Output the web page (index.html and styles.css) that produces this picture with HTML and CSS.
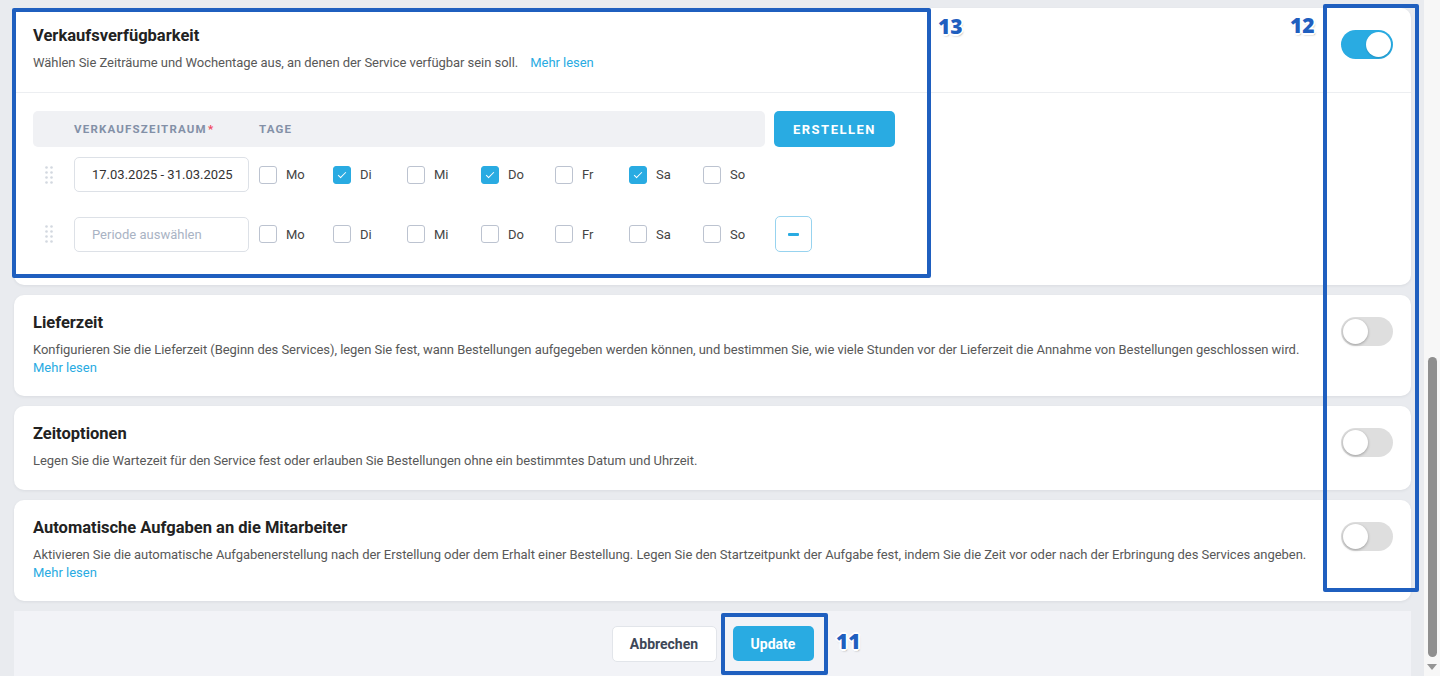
FILE: index.html
```html
<!DOCTYPE html>
<html lang="de">
<head>
    <meta charset="utf-8">
    <title>Service bearbeiten</title>
    <link rel="stylesheet" href="styles.css">
</head>
<body>
<div class="page">
    <main class="content">
        <section class="card">
            <div class="card-head card-head-split">
                <div class="card-text">
                    <h2 class="card-title">Verkaufsverfügbarkeit</h2>
                    <p class="card-desc">Wählen Sie Zeiträume und Wochentage aus, an denen der Service verfügbar sein soll. <a class="more more-inline" href="#">Mehr lesen</a></p>
                </div>
                <span class="switch on"></span>
            </div>
            <div class="card-body">
                <div class="periods-head">
                    <div class="periods-bar">
                        <span class="col-period">Verkaufszeitraum<span class="req">*</span></span>
                        <span class="col-days">Tage</span>
                    </div>
                    <button class="btn btn-primary btn-create">Erstellen</button>
                </div>

                <div class="period-row">
                    <div class="period-main">
                        <span class="drag">
                            <svg width="8" height="18" viewBox="0 0 8 18"><g fill="#d3d8e0"><circle cx="1.5" cy="1.5" r="1.3"/><circle cx="6.5" cy="1.5" r="1.3"/><circle cx="1.5" cy="6.5" r="1.3"/><circle cx="6.5" cy="6.5" r="1.3"/><circle cx="1.5" cy="11.5" r="1.3"/><circle cx="6.5" cy="11.5" r="1.3"/><circle cx="1.5" cy="16.5" r="1.3"/><circle cx="6.5" cy="16.5" r="1.3"/></g></svg>
                        </span>
                        <div class="period-input">17.03.2025 - 31.03.2025</div>
                        <div class="days">
                            <label class="day"><span class="check"></span>Mo</label>
                            <label class="day"><span class="check checked"></span>Di</label>
                            <label class="day"><span class="check"></span>Mi</label>
                            <label class="day"><span class="check checked"></span>Do</label>
                            <label class="day"><span class="check"></span>Fr</label>
                            <label class="day"><span class="check checked"></span>Sa</label>
                            <label class="day"><span class="check"></span>So</label>
                        </div>
                    </div>
                    <div class="period-action"></div>
                </div>

                <div class="period-row">
                    <div class="period-main">
                        <span class="drag">
                            <svg width="8" height="18" viewBox="0 0 8 18"><g fill="#d3d8e0"><circle cx="1.5" cy="1.5" r="1.3"/><circle cx="6.5" cy="1.5" r="1.3"/><circle cx="1.5" cy="6.5" r="1.3"/><circle cx="6.5" cy="6.5" r="1.3"/><circle cx="1.5" cy="11.5" r="1.3"/><circle cx="6.5" cy="11.5" r="1.3"/><circle cx="1.5" cy="16.5" r="1.3"/><circle cx="6.5" cy="16.5" r="1.3"/></g></svg>
                        </span>
                        <div class="period-input placeholder">Periode auswählen</div>
                        <div class="days">
                            <label class="day"><span class="check"></span>Mo</label>
                            <label class="day"><span class="check"></span>Di</label>
                            <label class="day"><span class="check"></span>Mi</label>
                            <label class="day"><span class="check"></span>Do</label>
                            <label class="day"><span class="check"></span>Fr</label>
                            <label class="day"><span class="check"></span>Sa</label>
                            <label class="day"><span class="check"></span>So</label>
                        </div>
                    </div>
                    <div class="period-action">
                        <button class="btn-remove"><span></span></button>
                    </div>
                </div>
            </div>
        </section>

        <section class="card">
            <div class="card-head">
                <div class="card-text">
                    <h2 class="card-title">Lieferzeit</h2>
                    <p class="card-desc">Konfigurieren Sie die Lieferzeit (Beginn des Services), legen Sie fest, wann Bestellungen aufgegeben werden können, und bestimmen Sie, wie viele Stunden vor der Lieferzeit die Annahme von Bestellungen geschlossen wird.</p>
                    <a class="more" href="#">Mehr lesen</a>
                </div>
                <span class="switch"></span>
            </div>
        </section>

        <section class="card">
            <div class="card-head card-head-plain">
                <div class="card-text">
                    <h2 class="card-title">Zeitoptionen</h2>
                    <p class="card-desc">Legen Sie die Wartezeit für den Service fest oder erlauben Sie Bestellungen ohne ein bestimmtes Datum und Uhrzeit.</p>
                </div>
                <span class="switch"></span>
            </div>
        </section>

        <section class="card">
            <div class="card-head">
                <div class="card-text">
                    <h2 class="card-title">Automatische Aufgaben an die Mitarbeiter</h2>
                    <p class="card-desc">Aktivieren Sie die automatische Aufgabenerstellung nach der Erstellung oder dem Erhalt einer Bestellung. Legen Sie den Startzeitpunkt der Aufgabe fest, indem Sie die Zeit vor oder nach der Erbringung des Services angeben.</p>
                    <a class="more" href="#">Mehr lesen</a>
                </div>
                <span class="switch"></span>
            </div>
        </section>

        <div class="form-footer">
            <button class="btn btn-light">Abbrechen</button>
            <button class="btn btn-primary btn-update">Update</button>
        </div>
    </main>

    <div class="scrollbar">
        <div class="scroll-thumb"></div>
        <span class="scroll-arrow"></span>
    </div>

    <!-- numbered callouts -->
    <div class="mark mark-13"></div>
    <div class="mark mark-12"></div>
    <div class="mark mark-11"></div>
    <span class="mark-num num-13">13</span>
    <span class="mark-num num-12">12</span>
    <span class="mark-num num-11">11</span>
</div>
</body>
</html>
```

FILE: styles.css
```css
body {
    margin: 0;
    height: 676px;
    overflow: hidden;
    font-family: Roboto, 'Liberation Sans', Arial, sans-serif;
    background: #e9ebef;
    color: #222;
}
.page {
    position: relative;
    display: flex;
    height: 676px;
}
.content {
    flex: 1;
    display: flex;
    flex-direction: column;
    gap: 10px;
    padding: 8px 13px 0 14px;
    min-width: 0;
}
.card {
    background: white;
    border-radius: 10px;
    box-shadow: 0 1px 3px rgba(40, 50, 70, 0.08);
}
.card-head {
    display: flex;
    align-items: flex-start;
    gap: 20px;
    padding: 18px 18px 19px 19px;
}
.card-head-plain {
    padding-bottom: 20px;
}
.card-head-split {
    padding-bottom: 20px;
    border-bottom: 1px solid #eceef1;
}
.card-text {
    flex: 1;
    min-width: 0;
}
.card-title {
    margin: 0;
    font-size: 16.5px;
    line-height: 20px;
    font-weight: 700;
    color: #222;
}
.card-desc {
    margin: 8px 0 0;
    font-size: 13px;
    line-height: 18px;
    letter-spacing: -0.05px;
    color: #585858;
}
.more {
    display: block;
    font-size: 13px;
    line-height: 18px;
    color: #29abe2;
    text-decoration: none;
}
.more-inline {
    display: inline;
    margin-left: 9px;
}

/* toggle switch */
.switch {
    position: relative;
    flex: none;
    width: 52px;
    height: 29px;
    margin-top: 4px;
    border-radius: 15px;
    background: #dedede;
}
.switch::after {
    content: "";
    position: absolute;
    top: 2px;
    left: 2px;
    width: 25px;
    height: 25px;
    border-radius: 50%;
    background: white;
    box-shadow: 0 1px 3px rgba(0, 0, 0, 0.3);
}
.switch.on {
    background: #29abe2;
}
.switch.on::after {
    left: 25px;
    box-shadow: 0 1px 2px rgba(0, 0, 0, 0.15);
}

/* periods table */
.card-body {
    padding: 18px 19px 33px;
}
.periods-head {
    display: flex;
    gap: 9px;
    margin-bottom: 10px;
}
.periods-bar {
    width: 732px;
    height: 36px;
    box-sizing: border-box;
    padding-left: 41px;
    display: flex;
    align-items: center;
    background: #f0f1f4;
    border-radius: 5px;
    font-size: 11.5px;
    font-weight: 700;
    letter-spacing: 1.2px;
    text-transform: uppercase;
    color: #8390a7;
}
.col-period {
    width: 185px;
}
.req {
    color: #f0475c;
    margin-left: 1px;
}
.btn {
    border: none;
    border-radius: 5px;
    cursor: pointer;
    font-family: inherit;
    font-size: 14px;
    font-weight: 700;
}
.btn-primary {
    background: #29abe2;
    color: white;
}
.btn-create {
    flex: none;
    width: 121px;
    height: 36px;
    font-size: 13px;
    letter-spacing: 1.5px;
    text-transform: uppercase;
}
.period-row {
    display: flex;
    gap: 9px;
    margin-bottom: 24px;
}
.period-row:last-child {
    margin-bottom: 0;
}
.period-main {
    width: 732px;
    flex: none;
    display: flex;
    align-items: center;
}
.drag {
    flex: none;
    width: 41px;
    box-sizing: border-box;
    padding-left: 12px;
    display: flex;
    align-items: center;
}
.period-input {
    flex: none;
    width: 175px;
    height: 35px;
    box-sizing: border-box;
    margin-right: 10px;
    padding-left: 17px;
    display: flex;
    align-items: center;
    border: 1px solid #dde1e7;
    border-radius: 5px;
    font-size: 13px;
    color: #333;
}
.period-input.placeholder {
    color: #a9b3c4;
}
.days {
    display: flex;
}
.day {
    flex: none;
    width: 74px;
    display: flex;
    align-items: center;
    gap: 9px;
    font-size: 13px;
    color: #444;
}
.day:last-child {
    width: auto;
}
.check {
    flex: none;
    width: 18px;
    height: 18px;
    box-sizing: border-box;
    border: 1px solid #bcc3d0;
    border-radius: 3px;
    display: flex;
    align-items: center;
    justify-content: center;
}
.check.checked {
    background: #29abe2;
    border-color: #29abe2;
}
.check.checked::after {
    content: "";
    width: 7px;
    height: 3px;
    margin-top: -2px;
    border-left: 1.5px solid white;
    border-bottom: 1.5px solid white;
    transform: rotate(-45deg);
}
.period-action {
    width: 121px;
}
.btn-remove {
    width: 37px;
    height: 36px;
    margin-left: 1px;
    display: flex;
    align-items: center;
    justify-content: center;
    background: white;
    border: 1px solid #97d3ef;
    border-radius: 5px;
    padding: 0;
}
.btn-remove span {
    width: 11px;
    height: 3px;
    border-radius: 1px;
    background: #29abe2;
}

/* footer bar */
.form-footer {
    flex: 1;
    display: flex;
    justify-content: center;
    align-items: flex-start;
    gap: 16px;
    padding-top: 15px;
    background: #f2f3f7;
}
.btn-light {
    width: 105px;
    height: 36px;
    background: white;
    border: 1px solid #e2e5ea;
    color: #3d4757;
}
.btn-update {
    width: 81px;
    height: 35px;
}

/* page scrollbar */
.scrollbar {
    width: 16px;
    flex: none;
    background: #f7f7f7;
    display: flex;
    flex-direction: column;
    align-items: center;
}
.scroll-thumb {
    width: 9px;
    height: 300px;
    margin-top: 357px;
    border-radius: 5px;
    background: #8f8f8f;
}
.scroll-arrow {
    margin-top: 7px;
    width: 0;
    height: 0;
    border-left: 5px solid transparent;
    border-right: 5px solid transparent;
    border-top: 6px solid #959595;
}

/* numbered callouts */
.mark {
    position: absolute;
    border: 4px solid #1f5fbf;
    border-radius: 2px;
    box-sizing: border-box;
}
.mark-13 {
    left: 12px;
    top: 8px;
    width: 919px;
    height: 270px;
}
.mark-12 {
    left: 1323px;
    top: 4px;
    width: 96px;
    height: 588px;
}
.mark-11 {
    left: 721px;
    top: 613px;
    width: 107px;
    height: 62px;
}
.mark-num {
    position: absolute;
    font-family: 'Open Sans', sans-serif;
    font-size: 21px;
    font-weight: 800;
    line-height: 1;
    color: #1f5fbf;
    text-shadow: -1px -1px 0 white, 1px -1px 0 white, -1px 1px 0 white, 1px 1px 0 white,
        0 -2px 0 white, 0 2px 0 white, -2px 0 0 white, 2px 0 0 white, 1px 2px 2px rgba(0, 0, 0, 0.35);
}
.num-13 {
    left: 938px;
    top: 16px;
}
.num-12 {
    left: 1290px;
    top: 15px;
}
.num-11 {
    left: 836px;
    top: 631px;
}
```
